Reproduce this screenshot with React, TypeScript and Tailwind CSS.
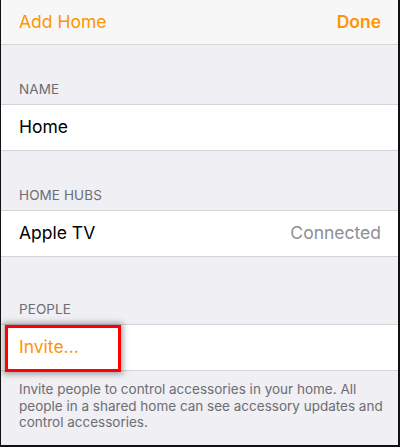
import React from "react";

const font = { fontFamily: '"Inter", "Liberation Sans", sans-serif' };

function Header({ text, h }: { text: string; h: string }) {
  return (
    <div className={`${h} flex items-end pl-[18px] pb-[7px] text-[13.5px] leading-[16px] text-[#6d6d72] tracking-[0.1px]`}>
      {text}
    </div>
  );
}

export default function App() {
  return (
    <div
      style={font}
      className="relative w-[400px] h-[447px] overflow-hidden bg-[#efeff4] border-l border-r-2 border-b-2 border-[#111]"
    >
      <div className="h-[45px] bg-[#f7f7f7] border-b border-[#d6d6da] flex items-center justify-between pl-[18px] pr-[17px] text-[17.5px] text-[#ff9500]">
        <span>Add Home</span>
        <span className="font-semibold">Done</span>
      </div>
      <Header text="NAME" h="h-[59px]" />
      <div className="h-[47px] bg-white border-y border-[#d4d4d8] flex items-center pl-[18px] text-[17.5px] text-black">
        Home
      </div>
      <Header text="HOME HUBS" h="h-[59px]" />
      <div className="h-[47px] bg-white border-y border-[#d4d4d8] flex items-center justify-between pl-[18px] pr-[17px] text-[17.5px]">
        <span className="text-black">Apple TV</span>
        <span className="text-[#8e8e93]">Connected</span>
      </div>
      <Header text="PEOPLE" h="h-[67px]" />
      <div className="relative h-[47px] bg-white border-y border-[#d4d4d8] flex items-center pl-[18px] text-[17.5px] text-[#ff9500]">
        Invite...
        <div className="absolute left-[4px] top-0 w-[116px] h-[47px] border-[3px] border-[#ff0000] shadow-[0_0_6px_2px_rgba(0,0,0,0.35)]" />
      </div>
      <p className="pl-[18px] pr-[14px] pt-[10px] text-[13.5px] leading-[16.7px] text-[#6d6d72]">
        Invite people to control accessories in your home. All people in a shared home can see accessory updates and control accessories.
      </p>
    </div>
  );
}
